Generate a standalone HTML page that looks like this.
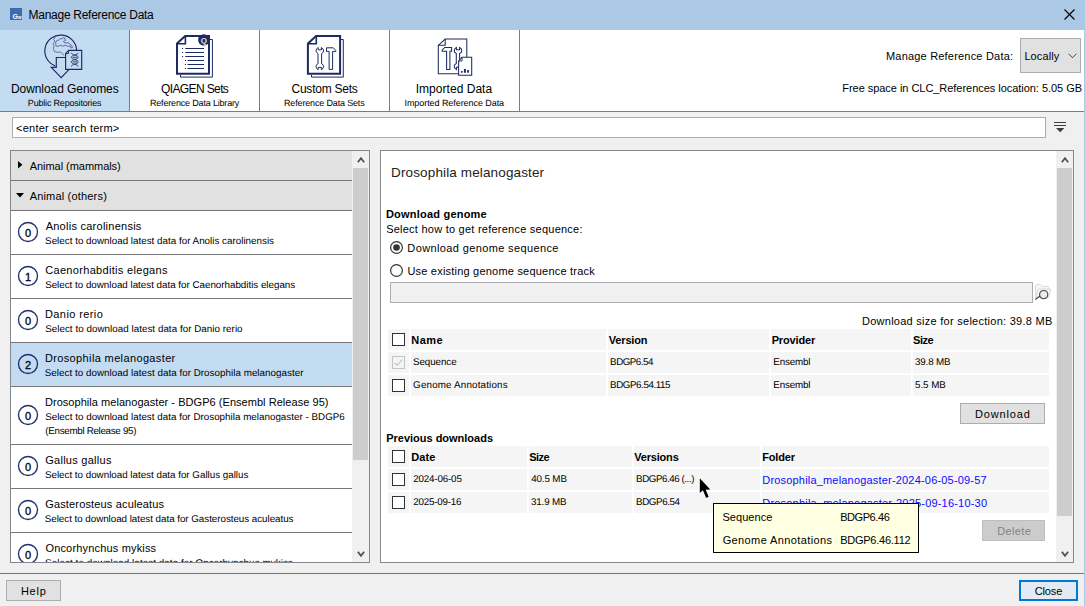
<!DOCTYPE html><html lang="en"><head><meta charset="utf-8"><title>Manage Reference Data</title><style>
html,body{margin:0;padding:0}
body{width:1085px;height:606px;position:relative;overflow:hidden;background:#f0f0f0;font-family:"Liberation Sans",sans-serif;color:#000}
.t{position:absolute;white-space:pre;line-height:20px;height:20px}
.b{position:absolute;box-sizing:border-box}
svg{position:absolute;overflow:visible}
.cell{position:absolute;background:#f5f5f5;height:21px}
.cb{position:absolute;box-sizing:border-box;width:13px;height:13px;border:1px solid #333;background:#fff}
.btn{position:absolute;box-sizing:border-box;background:#e1e1e1;border:1px solid #adadad}
.row{position:absolute;left:11px;width:341px;background:#fff;border-bottom:1px solid #787878}
</style></head><body>
<div class="b" id="titlebar" style="left:0;top:0;width:1085px;height:30px;background:#abc8e4"></div>
<div class="b" style="left:10px;top:8px;width:12px;height:12px;background:#3a6bb3"></div>
<span class="t" style="left:12.6px;top:7px;font-size:7px;font-weight:700;color:#fff;letter-spacing:0px">G<span style="font-size:4.5px">w</span></span>
<svg style="left:1063.6px;top:8.6px" width="11" height="11" viewBox="0 0 11 11"><path d="M0.5 0.5 L10.5 10.5 M10.5 0.5 L0.5 10.5" stroke="#000" stroke-width="1.15" fill="none"/></svg>
<div class="b" id="toolbar" style="left:0;top:30px;width:1085px;height:81px;background:#fff"></div>
<div class="b" style="left:0;top:30px;width:129px;height:81px;background:#c3dcf2"></div>
<div class="b" style="left:129px;top:30px;width:1px;height:81px;background:#7c7c7c"></div>
<div class="b" style="left:259px;top:30px;width:1px;height:81px;background:#7c7c7c"></div>
<div class="b" style="left:389px;top:30px;width:1px;height:81px;background:#7c7c7c"></div>
<div class="b" style="left:519px;top:30px;width:1px;height:81px;background:#7c7c7c"></div>
<div class="b" style="left:0;top:111px;width:1085px;height:1px;background:#7c7c7c"></div>

<svg id="ic1" style="left:38px;top:30px" width="52" height="52" viewBox="0 0 52 52"><g fill="none" stroke="#1d2b60" stroke-width="1.15" stroke-linejoin="miter">
<path d="M38.6 20.6 A15.9 15.9 0 1 0 17.2 35.9"/>
<path d="M14.6 7.2 L13.2 9.6 L14.4 11.2 L12.6 13.6 L13.6 15.6 L13 18.4 L13.8 21.6 L16.8 22.4 L20 22 L22 23.6 L23.4 25.4 M15.2 12.4 Q16 9.6 18.2 10.2 L19.6 8.6 L21.8 8.8 L22.6 7.6 L24.2 8 L25 10.4 L22.8 11.6 L24.6 13 L28 12.6 L29.4 14.4 L31 15.2 L32 17.6 L30.4 18 L29.6 16 L27.2 16.4 L25.4 15.2 L22.2 16.2 L20.2 15.2 L17.4 16.4 L15.4 15.8 Z" stroke="#4b4189" stroke-width="0.75" transform="translate(2.5,0)"/>
<path d="M18.3 27.5 H27.6 V37.4 H33.1 L23.2 47.6 L13.3 37.4 H18.3 Z" fill="#c3dcf2"/>
<path d="M27.6 23.6 L30.6 20.4 H43.7 V39.4 H27.6 Z" fill="#c3dcf2"/>
<path d="M27.6 23.6 H30.6 V20.4" stroke-width="0.9"/>
<path d="M33.3 22.7 C33.3 25 40.2 25 40.2 27.3 C40.2 29.6 33.3 29.6 33.3 31.9 C33.3 34.2 40.2 34.2 40.2 36.5 M40.2 22.7 C40.2 25 33.3 25 33.3 27.3 C33.3 29.6 40.2 29.6 40.2 31.9 C40.2 34.2 33.3 34.2 33.3 36.5 M34.6 27.3 H38.9 M34.6 31.9 H38.9" stroke-width="0.85"/>
</g></svg>
<svg id="ic2" style="left:169px;top:30px" width="52" height="52" viewBox="0 0 52 52"><g fill="none" stroke="#1d2b60">
<path d="M41 9.5 H43.4 V47.1 H11.5 V44.8" stroke-width="1"/>
<path d="M8 13.6 L16.2 6 H40 V43.8 H8 Z" fill="#fff" stroke-width="2"/>
<path d="M8 13.7 H16.4 V6" stroke-width="1.6"/>
<path d="M16.3 18.5H35M16.3 22.5H35M16.3 26.5H35M18.5 30.5H35M18.5 34.5H35M18.5 38.5H35" stroke-width="1.1"/>
<path d="M13 18.5h1.1M13 22.5h1.1M13 26.5h1.1M15.9 30.5h1.1M15.9 34.5h1.1M15.9 38.5h1.1" stroke-width="1.1"/></g>
<circle cx="34.8" cy="9.9" r="5.7" fill="#1d2b60"/><text x="34.8" y="12.8" font-size="8" font-weight="700" fill="#dfe3ee" text-anchor="middle" style="font-family:'Liberation Sans',sans-serif">Q</text></svg>
<svg id="ic3" style="left:299px;top:30px" width="52" height="52" viewBox="0 0 52 52"><g fill="none" stroke="#1d2b60">
<path d="M42 9.5 H44.3 V47.1 H12.5 V44.8" stroke-width="1"/>
<path d="M8.9 13.6 L17.1 6 H41.1 V43.8 H8.9 Z" fill="#fff" stroke-width="2"/>
<path d="M8.9 13.7 H17.3 V6" stroke-width="1.6"/>
<path d="M19.2 17.5 V19.8 H22.4 V17.5 Q24.6 18.6 24.6 20.8 Q24.6 22.6 22.6 23.6 V33.6 Q24.6 34.6 24.6 36.4 Q24.6 38.6 22.4 39.7 V37.4 H19.2 V39.7 Q17 38.6 17 36.4 Q17 34.6 19 33.6 V23.6 Q17 22.6 17 20.8 Q17 18.6 19.2 17.5 Z" stroke-width="1"/>
<path d="M27.5 17.8 H34.3 L36.8 20.4 V21.4 H33.6 V39.4 H30.1 V21.4 H27.5 Z" stroke-width="1"/></g></svg>
<svg id="ic4" style="left:429px;top:30px" width="52" height="52" viewBox="0 0 52 52"><g fill="none" stroke="#1d2b60" stroke-width="1.05">
<path d="M9.3 15.3 L16.2 9 H37.8 V43.8 H9.3 Z" fill="#fff"/>
<path d="M9.3 15.3 H16.2 V9"/>
<path d="M22.6 17.4 H15.8 L13.2 20 V21.2 H17.6 V39.4 H20.9 V21.2 H22.6 Z"/>
<path d="M27.4 17.4 V19.7 H30.6 V17.4 Q32.8 18.5 32.8 20.7 Q32.8 22.5 30.6 23.5 V33.5 Q32.8 34.5 32.8 36.3 Q32.8 38.5 30.6 39.6 V37.3 H27.4 V39.6 Q25.2 38.5 25.2 36.3 Q25.2 34.5 27.3 33.5 V23.5 Q25.2 22.5 25.2 20.7 Q25.2 18.5 27.4 17.4 Z"/>
<path d="M29.6 31 L33 27.3 H42.7 V45.3 H29.6 Z" fill="#fff"/>
<path d="M29.6 31 H33 V27.3" stroke-width="0.9"/></g>
<path d="M32 41 h1.6 v1.7 h-1.6z M34.9 38.9 h2 v3.8 h-2z M38.1 40.1 h1.8 v2.6 h-1.8z" fill="#1d2b60"/></svg>

<div class="btn" style="left:1020px;top:38px;width:61px;height:35px"></div>
<svg style="left:1067.5px;top:53.3px" width="9" height="6" viewBox="0 0 9 6"><path d="M0.5 0.7 L4.5 4.7 L8.5 0.7" stroke="#444" stroke-width="1" fill="none"/></svg>
<div class="b" style="left:12px;top:117px;width:1034px;height:21px;background:#fff;border:1px solid #abadb3"></div>
<svg style="left:1054px;top:122px" width="12" height="11" viewBox="0 0 12 11"><path d="M0 0.5H12M0 3.5H12" stroke="#3c3c3c" stroke-width="1" fill="none"/><path d="M2 6 H10.4 L6.2 10.2 Z" fill="#3c3c3c"/></svg>
<div class="b" id="leftpanel" style="left:10px;top:150px;width:360px;height:413px;border:1px solid #828790;background:#fff;overflow:hidden"></div>
<div class="b" style="left:11px;top:151px;width:341px;height:30px;background:#e1e1e1;border-bottom:1px solid #757575"></div>
<div class="b" style="left:11px;top:181px;width:341px;height:30px;background:#e1e1e1;border-bottom:1px solid #757575"></div>
<svg style="left:17.8px;top:161.2px" width="5" height="8" viewBox="0 0 5 8"><path d="M0 0 L4.4 3.8 L0 7.6 Z" fill="#000"/></svg>
<svg style="left:15.8px;top:192.8px" width="8" height="5" viewBox="0 0 8 5"><path d="M0 0 L8 0 L4 4.4 Z" fill="#000"/></svg>
<div class="b" style="left:0;top:0;width:352px;height:562px;overflow:hidden">
<div class="row" style="top:211px;height:44px;box-sizing:border-box;background:#fff"></div>
<svg style="left:17px;top:221px" width="22" height="22" viewBox="0 0 22 22"><circle cx="11" cy="11" r="9.5" fill="none" stroke="#1f2f6b" stroke-width="1.35"/></svg>
<span class="t" style="left:18px;width:20px;text-align:center;top:223px;font-size:11px;-webkit-text-stroke:0.3px #000">0</span>
<div class="row" style="top:255px;height:44px;box-sizing:border-box;background:#fff"></div>
<svg style="left:17px;top:265px" width="22" height="22" viewBox="0 0 22 22"><circle cx="11" cy="11" r="9.5" fill="none" stroke="#1f2f6b" stroke-width="1.35"/></svg>
<span class="t" style="left:18px;width:20px;text-align:center;top:267px;font-size:11px;-webkit-text-stroke:0.3px #000">1</span>
<div class="row" style="top:299px;height:44px;box-sizing:border-box;background:#fff"></div>
<svg style="left:17px;top:309px" width="22" height="22" viewBox="0 0 22 22"><circle cx="11" cy="11" r="9.5" fill="none" stroke="#1f2f6b" stroke-width="1.35"/></svg>
<span class="t" style="left:18px;width:20px;text-align:center;top:311px;font-size:11px;-webkit-text-stroke:0.3px #000">0</span>
<div class="row" style="top:343px;height:44px;box-sizing:border-box;background:#c3dcf2"></div>
<svg style="left:17px;top:353px" width="22" height="22" viewBox="0 0 22 22"><circle cx="11" cy="11" r="9.5" fill="none" stroke="#1f2f6b" stroke-width="1.35"/></svg>
<span class="t" style="left:18px;width:20px;text-align:center;top:355px;font-size:11px;-webkit-text-stroke:0.3px #000">2</span>
<div class="row" style="top:387px;height:58px;box-sizing:border-box;background:#fff"></div>
<svg style="left:17px;top:404px" width="22" height="22" viewBox="0 0 22 22"><circle cx="11" cy="11" r="9.5" fill="none" stroke="#1f2f6b" stroke-width="1.35"/></svg>
<span class="t" style="left:18px;width:20px;text-align:center;top:406px;font-size:11px;-webkit-text-stroke:0.3px #000">0</span>
<div class="row" style="top:445px;height:44px;box-sizing:border-box;background:#fff"></div>
<svg style="left:17px;top:455px" width="22" height="22" viewBox="0 0 22 22"><circle cx="11" cy="11" r="9.5" fill="none" stroke="#1f2f6b" stroke-width="1.35"/></svg>
<span class="t" style="left:18px;width:20px;text-align:center;top:457px;font-size:11px;-webkit-text-stroke:0.3px #000">0</span>
<div class="row" style="top:489px;height:44px;box-sizing:border-box;background:#fff"></div>
<svg style="left:17px;top:499px" width="22" height="22" viewBox="0 0 22 22"><circle cx="11" cy="11" r="9.5" fill="none" stroke="#1f2f6b" stroke-width="1.35"/></svg>
<span class="t" style="left:18px;width:20px;text-align:center;top:501px;font-size:11px;-webkit-text-stroke:0.3px #000">0</span>
<div class="row" style="top:533px;height:44px;box-sizing:border-box;background:#fff"></div>
<svg style="left:17px;top:543px" width="22" height="22" viewBox="0 0 22 22"><circle cx="11" cy="11" r="9.5" fill="none" stroke="#1f2f6b" stroke-width="1.35"/></svg>
<span class="t" style="left:18px;width:20px;text-align:center;top:545px;font-size:11px;-webkit-text-stroke:0.3px #000">0</span>
<span class="t" style="left:45.67px;top:216px;font-size:11px;letter-spacing:0.256px;">Anolis carolinensis</span>
<span class="t" style="left:45.11px;top:232px;font-size:9.8px;letter-spacing:0.013px;text-rendering:geometricPrecision;">Select to download latest data for Anolis carolinensis</span>
<span class="t" style="left:45.22px;top:260px;font-size:11px;letter-spacing:0.316px;">Caenorhabditis elegans</span>
<span class="t" style="left:45.16px;top:276px;font-size:9.8px;letter-spacing:-0.009px;text-rendering:geometricPrecision;">Select to download latest data for Caenorhabditis elegans</span>
<span class="t" style="left:45.00px;top:304px;font-size:11px;letter-spacing:0.402px;">Danio rerio</span>
<span class="t" style="left:45.14px;top:320px;font-size:9.8px;letter-spacing:0.043px;text-rendering:geometricPrecision;">Select to download latest data for Danio rerio</span>
<span class="t" style="left:44.93px;top:348px;font-size:11px;letter-spacing:0.367px;">Drosophila melanogaster</span>
<span class="t" style="left:44.75px;top:364px;font-size:9.8px;letter-spacing:0.039px;text-rendering:geometricPrecision;">Select to download latest data for Drosophila melanogaster</span>
<span class="t" style="left:44.94px;top:392px;font-size:11px;letter-spacing:0.045px;">Drosophila melanogaster - BDGP6 (Ensembl Release 95)</span>
<span class="t" style="left:45.13px;top:408px;font-size:9.8px;letter-spacing:0.019px;text-rendering:geometricPrecision;">Select to download latest data for Drosophila melanogaster - BDGP6</span>
<span class="t" style="left:45.30px;top:422px;font-size:9.8px;letter-spacing:-0.302px;text-rendering:geometricPrecision;">(Ensembl Release 95)</span>
<span class="t" style="left:45.24px;top:450px;font-size:11px;letter-spacing:0.267px;">Gallus gallus</span>
<span class="t" style="left:44.96px;top:466px;font-size:9.8px;letter-spacing:-0.006px;text-rendering:geometricPrecision;">Select to download latest data for Gallus gallus</span>
<span class="t" style="left:45.24px;top:494px;font-size:11px;letter-spacing:0.154px;">Gasterosteus aculeatus</span>
<span class="t" style="left:44.81px;top:510px;font-size:9.8px;letter-spacing:-0.032px;text-rendering:geometricPrecision;">Select to download latest data for Gasterosteus aculeatus</span>
<span class="t" style="left:45.43px;top:538px;font-size:11px;letter-spacing:0.171px;">Oncorhynchus mykiss</span>
<span class="t" style="left:45.07px;top:554px;font-size:9.8px;letter-spacing:0.081px;text-rendering:geometricPrecision;">Select to download latest data for Oncorhynchus mykiss</span>
</div>
<div class="b" style="left:352px;top:151px;width:17px;height:411px;background:#f0f0f0"></div>
<div class="b" style="left:353px;top:168px;width:15px;height:292px;background:#cdcdcd"></div>
<svg style="left:356.75px;top:156.3px" width="8" height="7" viewBox="0 0 7.5 7"><path d="M0.6 6.2 L3.75 2.3 L6.9 6.2" stroke="#505050" stroke-width="1.8" fill="none"/></svg>
<svg style="left:356.75px;top:550.6px" width="8" height="7" viewBox="0 0 7.5 7"><path d="M0.6 0.8 L3.75 4.7 L6.9 0.8" stroke="#505050" stroke-width="1.8" fill="none"/></svg>
<div class="b" id="rightpanel" style="left:380px;top:150px;width:694px;height:413px;border:1px solid #828790;background:#fff"></div>
<div class="b" style="left:1056px;top:151px;width:17px;height:411px;background:#f0f0f0"></div>
<div class="b" style="left:1057px;top:168px;width:15px;height:348px;background:#cdcdcd"></div>
<svg style="left:1060.85px;top:156.3px" width="8" height="7" viewBox="0 0 7.5 7"><path d="M0.6 6.2 L3.75 2.3 L6.9 6.2" stroke="#505050" stroke-width="1.8" fill="none"/></svg>
<svg style="left:1060.85px;top:550.6px" width="8" height="7" viewBox="0 0 7.5 7"><path d="M0.6 0.8 L3.75 4.7 L6.9 0.8" stroke="#505050" stroke-width="1.8" fill="none"/></svg>
<svg style="left:390px;top:241px" width="13" height="13" viewBox="0 0 13 13"><circle cx="6.5" cy="6.5" r="5.9" fill="#fff" stroke="#333" stroke-width="1.2"/><circle cx="6.5" cy="6.5" r="3.3" fill="#333"/></svg>
<svg style="left:390px;top:264px" width="13" height="13" viewBox="0 0 13 13"><circle cx="6.5" cy="6.5" r="5.9" fill="#fff" stroke="#333" stroke-width="1.2"/></svg>
<div class="b" style="left:390px;top:282px;width:643px;height:21px;background:#f0f0f0;border:1px solid #abadb3"></div>
<svg style="left:1035px;top:283px" width="17" height="18" viewBox="0 0 17 18"><path d="M0.6 14.5 V3 Q0.6 1.3 2.2 1.3 H5.2 L7.4 3.4 H12.6 Q13.6 3.4 13.6 4.6 V6 M0.6 14.5 L3 6.4 Q3.2 6 3.8 6 H15.2 Q15.9 6 15.7 6.8 L13.6 14.5 Z" fill="#f7f7f7" stroke="#d4d4d4" stroke-width="0.9"/><circle cx="8.7" cy="11.6" r="4.1" fill="#ececec" stroke="#484848" stroke-width="1.15"/><path d="M5.0 13.0 L0.3 16.5" stroke="#484848" stroke-width="1.2"/></svg>
<div class="cell" style="left:388px;top:329px;width:21px"></div>
<div class="cell" style="left:411px;top:329px;width:195px"></div>
<div class="cell" style="left:608px;top:329px;width:161px"></div>
<div class="cell" style="left:771px;top:329px;width:140px"></div>
<div class="cell" style="left:913px;top:329px;width:136px"></div>
<div class="cell" style="left:388px;top:352px;width:21px"></div>
<div class="cell" style="left:411px;top:352px;width:195px"></div>
<div class="cell" style="left:608px;top:352px;width:161px"></div>
<div class="cell" style="left:771px;top:352px;width:140px"></div>
<div class="cell" style="left:913px;top:352px;width:136px"></div>
<div class="cell" style="left:388px;top:375px;width:21px"></div>
<div class="cell" style="left:411px;top:375px;width:195px"></div>
<div class="cell" style="left:608px;top:375px;width:161px"></div>
<div class="cell" style="left:771px;top:375px;width:140px"></div>
<div class="cell" style="left:913px;top:375px;width:136px"></div>
<div class="cb" style="left:392px;top:333px"></div>
<div class="cb" style="left:392px;top:356px;border-color:#c4c4c4;background:#f5f5f5"></div>
<svg style="left:392px;top:356px" width="13" height="13" viewBox="0 0 13 13"><path d="M2.7 6.8 L5.2 9.3 L10.3 3.6" stroke="#c0c0c0" stroke-width="1.1" fill="none"/></svg>
<div class="cb" style="left:392px;top:379px"></div>
<div class="btn" style="left:960px;top:403px;width:85px;height:21px"></div>
<div class="cell" style="left:388px;top:446px;width:21px"></div>
<div class="cell" style="left:411px;top:446px;width:116px"></div>
<div class="cell" style="left:529px;top:446px;width:103px"></div>
<div class="cell" style="left:634px;top:446px;width:126px"></div>
<div class="cell" style="left:762px;top:446px;width:287px"></div>
<div class="cell" style="left:388px;top:469px;width:21px"></div>
<div class="cell" style="left:411px;top:469px;width:116px"></div>
<div class="cell" style="left:529px;top:469px;width:103px"></div>
<div class="cell" style="left:634px;top:469px;width:126px"></div>
<div class="cell" style="left:762px;top:469px;width:287px"></div>
<div class="cell" style="left:388px;top:492px;width:21px"></div>
<div class="cell" style="left:411px;top:492px;width:116px"></div>
<div class="cell" style="left:529px;top:492px;width:103px"></div>
<div class="cell" style="left:634px;top:492px;width:126px"></div>
<div class="cell" style="left:762px;top:492px;width:287px"></div>
<div class="cb" style="left:392px;top:450px"></div>
<div class="cb" style="left:392px;top:473px"></div>
<div class="cb" style="left:392px;top:496px"></div>
<div class="btn" style="left:982px;top:520px;width:63px;height:21px;background:#cccccc;border-color:#bfbfbf"></div>
<div class="b" style="left:0;top:573px;width:1085px;height:1px;background:#767676"></div>
<div class="btn" style="left:6px;top:580px;width:55px;height:21px"></div>
<div class="btn" style="left:1019px;top:580px;width:59px;height:21px;border:2px solid #0078d7;background:#e2eaf3"></div>
<span class="t" style="left:28.59px;top:5px;font-size:12px;letter-spacing:-0.278px;">Manage Reference Data</span>
<span class="t" style="left:10.94px;top:79px;font-size:12px;letter-spacing:-0.064px;">Download Genomes</span>
<span class="t" style="left:27.83px;top:93px;font-size:9.0px;letter-spacing:-0.189px;text-rendering:geometricPrecision;">Public Repositories</span>
<span class="t" style="left:161.07px;top:79px;font-size:12px;letter-spacing:-0.624px;">QIAGEN Sets</span>
<span class="t" style="left:149.98px;top:93px;font-size:9.0px;letter-spacing:-0.175px;text-rendering:geometricPrecision;">Reference Data Library</span>
<span class="t" style="left:291.51px;top:79px;font-size:12px;letter-spacing:-0.234px;">Custom Sets</span>
<span class="t" style="left:284.01px;top:93px;font-size:9.0px;letter-spacing:-0.157px;text-rendering:geometricPrecision;">Reference Data Sets</span>
<span class="t" style="left:415.72px;top:79px;font-size:12px;letter-spacing:0.033px;">Imported Data</span>
<span class="t" style="left:404.50px;top:93px;font-size:9.0px;letter-spacing:-0.067px;text-rendering:geometricPrecision;">Imported Reference Data</span>
<span class="t" style="left:885.96px;top:46px;font-size:11px;letter-spacing:0.198px;">Manage Reference Data:</span>
<span class="t" style="left:1024.39px;top:46px;font-size:11px;letter-spacing:0.125px;">Locally</span>
<span class="t" style="left:842.26px;top:78px;font-size:11px;letter-spacing:-0.039px;">Free space in CLC_References location: 5.05 GB</span>
<span class="t" style="left:16.11px;top:118px;font-size:11px;letter-spacing:0.228px;">&lt;enter search term&gt;</span>
<span class="t" style="left:29.67px;top:156px;font-size:11px;letter-spacing:-0.039px;">Animal (mammals)</span>
<span class="t" style="left:29.67px;top:186px;font-size:11px;letter-spacing:0.184px;">Animal (others)</span>
<span class="t" style="left:391.09px;top:163px;font-size:13.5px;letter-spacing:0.132px;color:#222;">Drosophila melanogaster</span>
<span class="t" style="left:385.94px;top:204px;font-size:11px;letter-spacing:0.214px;font-weight:700;">Download genome</span>
<span class="t" style="left:386.14px;top:219px;font-size:11px;letter-spacing:0.240px;">Select how to get reference sequence:</span>
<span class="t" style="left:407.35px;top:238px;font-size:11px;letter-spacing:0.374px;">Download genome sequence</span>
<span class="t" style="left:407.42px;top:261px;font-size:11px;letter-spacing:0.211px;">Use existing genome sequence track</span>
<span class="t" style="left:861.94px;top:311px;font-size:11px;letter-spacing:0.267px;">Download size for selection: 39.8 MB</span>
<span class="t" style="left:411.22px;top:330px;font-size:11px;letter-spacing:0.509px;font-weight:700;">Name</span>
<span class="t" style="left:608.77px;top:330px;font-size:11px;letter-spacing:-0.171px;font-weight:700;">Version</span>
<span class="t" style="left:771.63px;top:330px;font-size:11px;letter-spacing:-0.148px;font-weight:700;">Provider</span>
<span class="t" style="left:913.05px;top:330px;font-size:11px;letter-spacing:-0.449px;font-weight:700;">Size</span>
<span class="t" style="left:412.95px;top:353px;font-size:9.8px;letter-spacing:-0.064px;text-rendering:geometricPrecision;">Sequence</span>
<span class="t" style="left:610.11px;top:353px;font-size:9.8px;letter-spacing:-0.502px;text-rendering:geometricPrecision;">BDGP6.54</span>
<span class="t" style="left:773.34px;top:353px;font-size:9.8px;letter-spacing:-0.151px;text-rendering:geometricPrecision;">Ensembl</span>
<span class="t" style="left:914.95px;top:353px;font-size:9.8px;letter-spacing:-0.135px;text-rendering:geometricPrecision;">39.8 MB</span>
<span class="t" style="left:413.11px;top:376px;font-size:9.8px;letter-spacing:0.173px;text-rendering:geometricPrecision;">Genome Annotations</span>
<span class="t" style="left:610.08px;top:376px;font-size:9.8px;letter-spacing:-0.439px;text-rendering:geometricPrecision;">BDGP6.54.115</span>
<span class="t" style="left:773.34px;top:376px;font-size:9.8px;letter-spacing:-0.151px;text-rendering:geometricPrecision;">Ensembl</span>
<span class="t" style="left:915.00px;top:376px;font-size:9.8px;letter-spacing:-0.027px;text-rendering:geometricPrecision;">5.5 MB</span>
<span class="t" style="left:974.92px;top:404px;font-size:11px;letter-spacing:0.846px;">Download</span>
<span class="t" style="left:386.22px;top:428px;font-size:11px;letter-spacing:-0.011px;font-weight:700;">Previous downloads</span>
<span class="t" style="left:411.22px;top:447px;font-size:11px;letter-spacing:0.063px;font-weight:700;">Date</span>
<span class="t" style="left:529.33px;top:447px;font-size:11px;letter-spacing:-0.612px;font-weight:700;">Size</span>
<span class="t" style="left:634.29px;top:447px;font-size:11px;letter-spacing:-0.198px;font-weight:700;">Versions</span>
<span class="t" style="left:762.22px;top:447px;font-size:11px;letter-spacing:-0.142px;font-weight:700;">Folder</span>
<span class="t" style="left:413.16px;top:470px;font-size:9.8px;letter-spacing:-0.156px;text-rendering:geometricPrecision;">2024-06-05</span>
<span class="t" style="left:531.18px;top:470px;font-size:9.8px;letter-spacing:-0.118px;text-rendering:geometricPrecision;">40.5 MB</span>
<span class="t" style="left:636.12px;top:470px;font-size:9.8px;letter-spacing:-0.457px;text-rendering:geometricPrecision;">BDGP6.46 (...)</span>
<span class="t" style="left:762.25px;top:470px;font-size:11px;letter-spacing:0.187px;color:#0b0bff;">Drosophila_melanogaster-2024-06-05-09-57</span>
<span class="t" style="left:413.19px;top:493px;font-size:9.8px;letter-spacing:-0.207px;text-rendering:geometricPrecision;">2025-09-16</span>
<span class="t" style="left:530.91px;top:493px;font-size:9.8px;letter-spacing:-0.130px;text-rendering:geometricPrecision;">31.9 MB</span>
<span class="t" style="left:636.12px;top:493px;font-size:9.8px;letter-spacing:-0.431px;text-rendering:geometricPrecision;">BDGP6.54</span>
<span class="t" style="left:762.31px;top:493px;font-size:11px;letter-spacing:0.196px;color:#0b0bff;">Drosophila_melanogaster-2025-09-16-10-30</span>
<span class="t" style="left:997.26px;top:521px;font-size:11px;letter-spacing:0.348px;color:#838383;">Delete</span>
<span class="t" style="left:20.96px;top:581px;font-size:11px;letter-spacing:0.724px;">Help</span>
<span class="t" style="left:1034.69px;top:581px;font-size:11px;letter-spacing:-0.117px;">Close</span>
<div class="b" id="tooltip" style="left:713px;top:503px;width:206px;height:50px;background:#ffffe1;border:1px solid #000"></div>
<span class="t" style="left:722.46px;top:507px;font-size:11px;letter-spacing:0.054px;">Sequence</span>
<span class="t" style="left:840.16px;top:507px;font-size:11px;letter-spacing:-0.428px;">BDGP6.46</span>
<span class="t" style="left:722.63px;top:530px;font-size:11px;letter-spacing:0.396px;">Genome Annotations</span>
<span class="t" style="left:840.16px;top:530px;font-size:11px;letter-spacing:-0.247px;">BDGP6.46.112</span>
<svg style="left:699px;top:477px" width="14" height="23" viewBox="0 0 14 23"><path d="M0.8 1.2 L0.8 15.9 L3.9 13.2 L7.1 21 L9.7 19.7 L6.7 12.7 L11.3 12.5 Z" fill="#000" stroke="#fff" stroke-width="1.7" stroke-linejoin="round" paint-order="stroke"/></svg>
<div class="b" style="left:1084px;top:0;width:1px;height:606px;background:#abc8e4"></div>
</body></html>
